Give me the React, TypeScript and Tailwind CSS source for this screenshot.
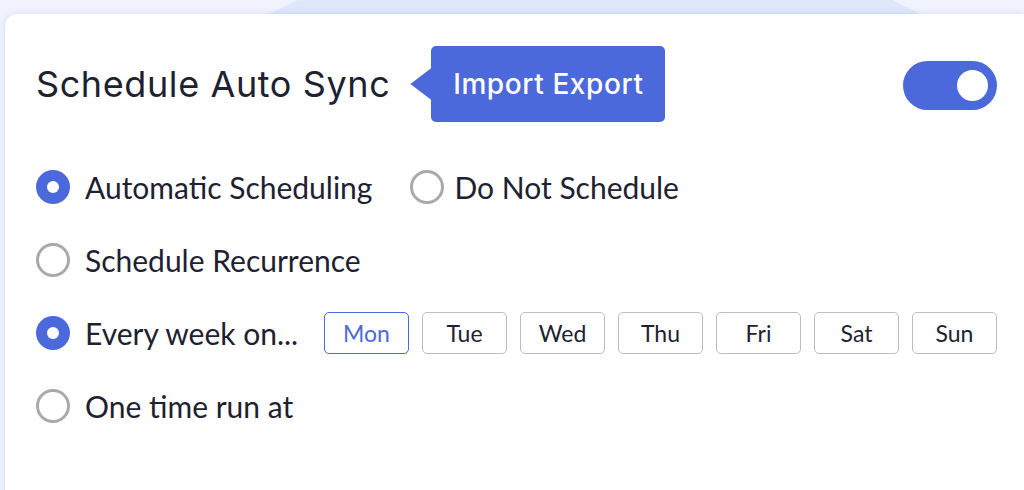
import React from "react";

function Radio({ checked }: { checked: boolean }) {
  return checked ? (
    <span className="flex h-[34px] w-[34px] shrink-0 items-center justify-center rounded-full bg-[#4b69db]">
      <span className="h-[12px] w-[12px] rounded-full bg-white" />
    </span>
  ) : (
    <span className="h-[34px] w-[34px] shrink-0 rounded-full border-[3px] border-[#a9a9a9] bg-white" />
  );
}

function RadioItem({ checked, label, gap = "gap-[15px]" }: { checked: boolean; label: string; gap?: string }) {
  return (
    <label className={`flex items-center ${gap}`}>
      <Radio checked={checked} />
      <span className="text-[30px] leading-none text-[#1e2230]">{label}</span>
    </label>
  );
}

const days = ["Mon", "Tue", "Wed", "Thu", "Fri", "Sat", "Sun"];

export default function App() {
  return (
    <div
      className="relative h-[490px] w-[1024px] overflow-hidden bg-[#f0f3fd] pl-[5px] pt-[14px]"
      style={{ fontFamily: "Lato, 'Noto Sans', sans-serif" }}
    >
      <div className="absolute left-[268px] top-0 h-[14px] w-[653px] bg-[#dfe7fb] [clip-path:polygon(30px_0,624px_0,100%_100%,0_100%)]" />
      <div className="relative h-[500px] rounded-tl-[12px] bg-white pl-[31px] pr-[27px] pt-[32px] shadow-[0_0_6px_rgba(120,145,230,0.25)]">
        <div className="flex h-[76px] items-center">
          <h1
            className="text-[36px] font-normal leading-none tracking-[0.6px] text-[#1e2230]"
            style={{ fontFamily: "Inter, Lato, sans-serif" }}
          >
            Schedule Auto Sync
          </h1>
          <div className="ml-[20px] flex items-center">
            <span className="h-[32px] w-[21px] bg-[#4b69db] [clip-path:polygon(100%_0,100%_100%,0_50%)]" />
            <span
              className="flex h-[76px] w-[234px] items-center justify-center rounded-[5px] bg-[#4b69db] text-[28px] font-medium leading-none tracking-[0.6px] text-white"
              style={{ fontFamily: "Inter, Lato, sans-serif" }}
            >
              Import Export
            </span>
          </div>
          <button className="ml-auto mt-[3px] flex h-[49px] w-[94px] items-center justify-end rounded-full bg-[#4b69db] pr-[9px]">
            <span className="h-[31px] w-[31px] rounded-full bg-white" />
          </button>
        </div>

        <div className="mt-[44px] flex h-[42px] items-center">
          <RadioItem checked label="Automatic Scheduling" />
          <div className="ml-[38px]">
            <RadioItem checked={false} label="Do Not Schedule" gap="gap-[10px]" />
          </div>
        </div>

        <div className="mt-[31px] flex h-[42px] items-center">
          <RadioItem checked={false} label="Schedule Recurrence" />
        </div>

        <div className="mt-[31px] flex h-[42px] items-center">
          <RadioItem checked label="Every week on..." />
          <div className="ml-auto flex gap-[13px]">
            {days.map((d, i) => (
              <button
                key={d}
                className={
                  i === 0
                    ? "flex h-[42px] w-[85px] items-center justify-center rounded-[5px] border border-[#4b69db] text-[23px] leading-none text-[#4b69db]"
                    : "flex h-[42px] w-[85px] items-center justify-center rounded-[5px] border border-[#bdbdbd] text-[23px] leading-none text-[#1e2230]"
                }
              >
                {d}
              </button>
            ))}
          </div>
        </div>

        <div className="mt-[31px] flex h-[42px] items-center">
          <RadioItem checked={false} label="One time run at" />
        </div>
      </div>
    </div>
  );
}
